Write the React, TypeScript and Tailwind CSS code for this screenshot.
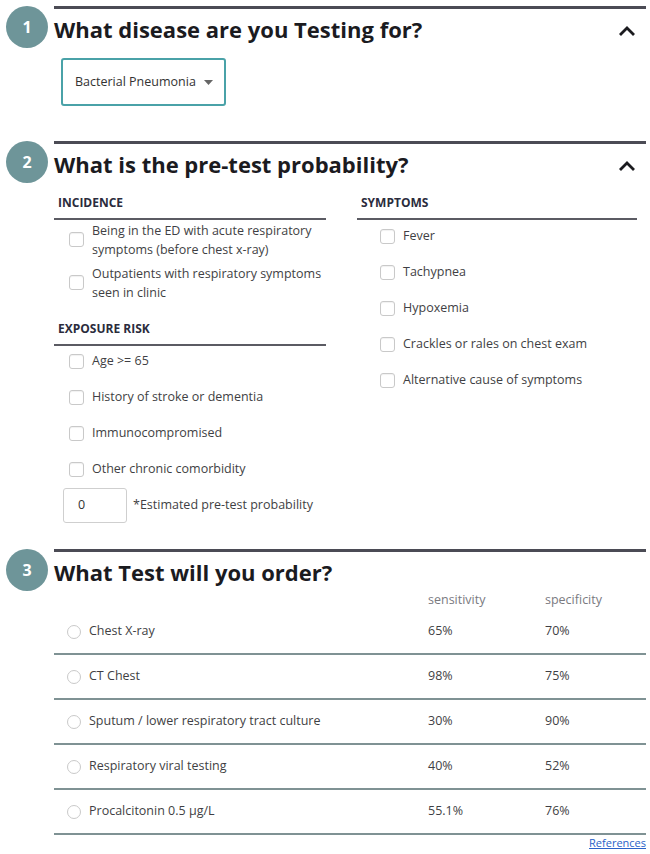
import React from 'react';

const font = { fontFamily: '"Open Sans", "Noto Sans", sans-serif' };

const StepHeading = ({ n, title, open = true }: { n: number; title: string; open?: boolean }) => (
  <div className="flex items-center">
    <div className="w-[54px] shrink-0 flex justify-start pl-[6px]">
      <div className="w-[42px] h-[42px] rounded-full bg-[#6e9599] text-white text-[16px] font-bold flex items-center justify-center">
        {n}
      </div>
    </div>
    <div className="flex-1 border-t-[3px] border-[#4b4b55] mr-[4px] h-[42px] flex items-center justify-between pt-[2px]">
      <h2 className="text-[22px] font-bold text-[#1b1b1f] whitespace-nowrap">{title}</h2>
      {open && (
        <svg width="18" height="12" viewBox="0 0 18 12" className="mr-[10px] mt-[2px]">
          <path d="M2 10 L9 3 L16 10" fill="none" stroke="#1b1b1f" strokeWidth="2.8" />
        </svg>
      )}
    </div>
  </div>
);

const Box = () => (
  <span className="w-[15px] h-[15px] shrink-0 rounded-[3px] border border-[#c9c9c9] bg-white shadow-[inset_0_1px_1px_rgba(0,0,0,0.06)]" />
);

const Check = ({ label }: { label: React.ReactNode }) => (
  <label className="flex items-center gap-[8px] h-[36px] text-[12.5px] text-[#3f3f44] whitespace-nowrap">
    <Box />
    <span>{label}</span>
  </label>
);

const GroupTitle = ({ text }: { text: string }) => (
  <div className="text-[12px] font-bold text-[#2b2c3c] uppercase px-[4px] pb-[6px] border-b-2 border-[#5b5b63]">
    {text}
  </div>
);

const tests = [
  { name: 'Chest X-ray', sens: '65%', spec: '70%' },
  { name: 'CT Chest', sens: '98%', spec: '75%' },
  { name: 'Sputum / lower respiratory tract culture', sens: '30%', spec: '90%' },
  { name: 'Respiratory viral testing', sens: '40%', spec: '52%' },
  { name: 'Procalcitonin 0.5 µg/L', sens: '55.1%', spec: '76%' },
];

const App = () => {
  return (
    <div className="w-[650px] h-[854px] bg-white overflow-hidden" style={font}>
      {/* step 1 */}
      <div className="pt-[6px]">
        <StepHeading n={1} title="What disease are you Testing for?" />
        <div className="pl-[61px] pt-[10px]">
          <div className="w-[165px] h-[48px] rounded-[3px] border-2 border-[#4aa2a8] flex items-center pl-[12px] gap-[8px] text-[12.5px] text-[#333]">
            Bacterial Pneumonia
            <svg width="9" height="5" viewBox="0 0 9 5">
              <path d="M0 0 L9 0 L4.5 5 Z" fill="#666" />
            </svg>
          </div>
        </div>
      </div>

      {/* step 2 */}
      <div className="pt-[35px]">
        <StepHeading n={2} title="What is the pre-test probability?" />
        <div className="flex pl-[54px] pr-[13px] pt-[11px]">
          <div className="w-[272px]">
            <GroupTitle text="Incidence" />
            <div className="pl-[15px] mt-[-2px]">
              <label className="flex items-center gap-[8px] h-[43px] text-[12.5px] text-[#3f3f44] leading-[19px] whitespace-nowrap">
                <Box />
                <span>Being in the ED with acute respiratory<br />symptoms (before chest x-ray)</span>
              </label>
              <label className="flex items-center gap-[8px] h-[43px] text-[12.5px] text-[#3f3f44] leading-[19px] whitespace-nowrap">
                <Box />
                <span>Outpatients with respiratory symptoms<br />seen in clinic</span>
              </label>
            </div>
            <div className="pt-[16px]">
              <GroupTitle text="Exposure Risk" />
            </div>
            <div className="pl-[15px] mt-[-3px]">
              <Check label="Age >= 65" />
              <Check label="History of stroke or dementia" />
              <Check label="Immunocompromised" />
              <Check label="Other chronic comorbidity" />
            </div>
            <div className="flex items-center gap-[6px] pl-[9px] pt-[1px]">
              <div className="w-[64px] h-[35px] rounded-[3px] border border-[#cfcfcf] flex items-center pl-[14px] text-[12.5px] text-[#333]">
                0
              </div>
              <span className="text-[12.5px] text-[#3f3f44]">*Estimated pre-test probability</span>
            </div>
          </div>
          <div className="ml-[31px] flex-1">
            <GroupTitle text="Symptoms" />
            <div className="pl-[23px] mt-[-2px]">
              <Check label="Fever" />
              <Check label="Tachypnea" />
              <Check label="Hypoxemia" />
              <Check label="Crackles or rales on chest exam" />
              <Check label="Alternative cause of symptoms" />
            </div>
          </div>
        </div>
      </div>

      {/* step 3 */}
      <div className="pt-[26px]">
        <StepHeading n={3} title="What Test will you order?" open={false} />
        <div className="pl-[54px] pr-[4px]">
          <div className="flex h-[19px] items-end text-[12.5px] text-[#7a7a7f]">
            <span className="ml-[374px] w-[117px]">sensitivity</span>
            <span>specificity</span>
          </div>
          {tests.map((t) => (
            <div
              key={t.name}
              className="flex items-center h-[45px] border-b-2 border-[#7f9294] text-[12.5px] text-[#3f3f44]"
            >
              <span className="w-[374px] flex items-center gap-[8px] pl-[13px]">
                <span className="w-[14px] h-[14px] rounded-full border border-[#c9c9c9] bg-white" />
                {t.name}
              </span>
              <span className="w-[117px]">{t.sens}</span>
              <span>{t.spec}</span>
            </div>
          ))}
          <div className="flex justify-end">
            <a href="#" className="text-[11px] leading-[16px] text-[#2a62c9] underline">
              References
            </a>
          </div>
        </div>
      </div>
    </div>
  );
};

export default App;
